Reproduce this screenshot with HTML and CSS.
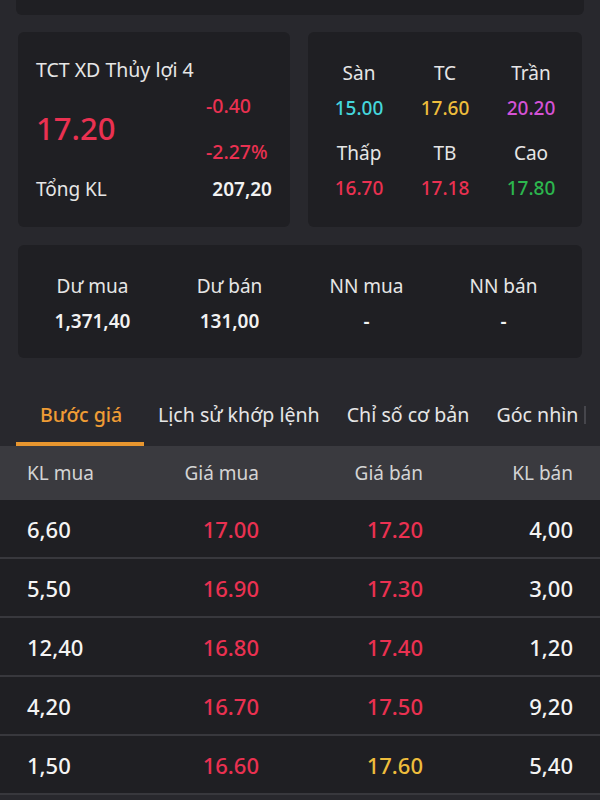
FILE: index.html
```html
<!DOCTYPE html>
<html lang="vi">
<head>
    <meta charset="UTF-8">
    <meta name="viewport" content="width=device-width, initial-scale=1.0">
    <title>Bước giá</title>
    <link rel="stylesheet" href="styles.css">
</head>
<body>
    <div class="wrap">
        <div class="card top-strip"></div>

        <div class="summary">
            <div class="card quote">
                <div class="name">TCT XD Thủy lợi 4</div>
                <div class="price-line">
                    <div class="price red">17.20</div>
                    <div class="change red">
                        <div>-0.40</div>
                        <div>-2.27%</div>
                    </div>
                </div>
                <div class="volume">
                    <span>Tổng KL</span>
                    <span class="strong">207,20</span>
                </div>
            </div>

            <div class="card levels">
                <div class="label">Sàn</div>
                <div class="label">TC</div>
                <div class="label">Trần</div>
                <div class="num cyan">15.00</div>
                <div class="num yellow">17.60</div>
                <div class="num purple">20.20</div>
                <div class="label low">Thấp</div>
                <div class="label low">TB</div>
                <div class="label low">Cao</div>
                <div class="num red">16.70</div>
                <div class="num red">17.18</div>
                <div class="num green">17.80</div>
            </div>
        </div>

        <div class="card orders">
            <div class="label">Dư mua</div>
            <div class="label">Dư bán</div>
            <div class="label">NN mua</div>
            <div class="label">NN bán</div>
            <div class="strong">1,371,40</div>
            <div class="strong">131,00</div>
            <div class="strong">-</div>
            <div class="strong">-</div>
        </div>
    </div>

    <div class="tabs">
        <div class="tab active">Bước giá</div>
        <div class="tab">Lịch sử khớp lệnh</div>
        <div class="tab">Chỉ số cơ bản</div>
        <div class="tab">Góc nhìn</div>
        <div class="tab-edge"></div>
    </div>

    <div class="book">
        <div class="book-row head">
            <div>KL mua</div>
            <div>Giá mua</div>
            <div>Giá bán</div>
            <div>KL bán</div>
        </div>
        <div class="book-row">
            <div>6,60</div><div class="red">17.00</div><div class="red">17.20</div><div>4,00</div>
        </div>
        <div class="book-row">
            <div>5,50</div><div class="red">16.90</div><div class="red">17.30</div><div>3,00</div>
        </div>
        <div class="book-row">
            <div>12,40</div><div class="red">16.80</div><div class="red">17.40</div><div>1,20</div>
        </div>
        <div class="book-row">
            <div>4,20</div><div class="red">16.70</div><div class="red">17.50</div><div>9,20</div>
        </div>
        <div class="book-row">
            <div>1,50</div><div class="red">16.60</div><div class="yellow">17.60</div><div>5,40</div>
        </div>
    </div>
</body>
</html>
```

FILE: styles.css
```css
body { margin: 0; background: #28282d; color: #e6e6e6; font-family: "Noto Sans", sans-serif; font-size: 19px; overflow: hidden; }
.wrap { padding: 0 18px; }
.card { background: #1f1f23; border-radius: 6px; }
.top-strip { height: 15px; margin: 0 -2px 17px; border-radius: 0 0 6px 6px; }

.red { color: #ea3151; }
.cyan { color: #44d6dc; }
.yellow { color: #eebd3c; }
.purple { color: #d552d6; }
.green { color: #2cb64e; }
.strong { font-weight: 600; color: #f2f2f2; }

.summary { display: grid; grid-template-columns: 272px 274px; gap: 18px; height: 195px; }
.quote { padding: 26px 18px 0 18px; }
.name { line-height: 24px; font-size: 19.5px; }
.price-line { display: flex; justify-content: space-between; margin-top: 1px; }
.price { font-size: 31px; font-weight: 500; line-height: 50px; margin-top: 20px; }
.change { width: 66px; font-size: 19.5px; line-height: 46px; font-weight: 500; }
.volume { display: flex; justify-content: space-between; line-height: 24px; margin-top: 2px; }

.levels { display: grid; grid-template-columns: repeat(3, 86px); justify-content: center; text-align: center; align-content: start; padding-top: 29px; }
.levels .label { line-height: 24px; }
.levels .num { line-height: 24px; margin-top: 11px; font-weight: 500; }
.levels .low { margin-top: 21px; }

.orders { margin-top: 18px; height: 113px; display: grid; grid-template-columns: repeat(4, 137px); justify-content: center; text-align: center; align-content: center; row-gap: 11px; padding: 3px 4px 0 0; box-sizing: border-box; }
.orders div { line-height: 24px; }

.tabs { display: flex; align-items: flex-end; height: 88px; padding-left: 16px; white-space: nowrap; overflow: hidden; font-size: 19.6px; }
.tab { padding: 0 13px 14px 14px; line-height: 26px; border-bottom: 4px solid transparent; }
.tab.active { width: 128px; box-sizing: border-box; padding-left: 24px; color: #ef9c35; border-bottom-color: #e8962f; font-weight: 500; }
.tab-edge { width: 2px; height: 18px; margin: 0 0 22px -7px; background: #46464c; flex-shrink: 0; }

.book-row { display: grid; grid-template-columns: 132px 100px 164px 150px; padding: 0 27px; height: 57px; align-items: center; font-size: 22px; font-weight: 500; color: #f4f4f4; border-bottom: 2px solid #38383d; background: #1f1f23; }
.book-row div:not(:first-child) { text-align: right; }
.book-row.head { height: 54px; font-size: 19px; font-weight: 400; color: #d4d4d4; background: #3a3a3f; border-bottom: none; }
```
